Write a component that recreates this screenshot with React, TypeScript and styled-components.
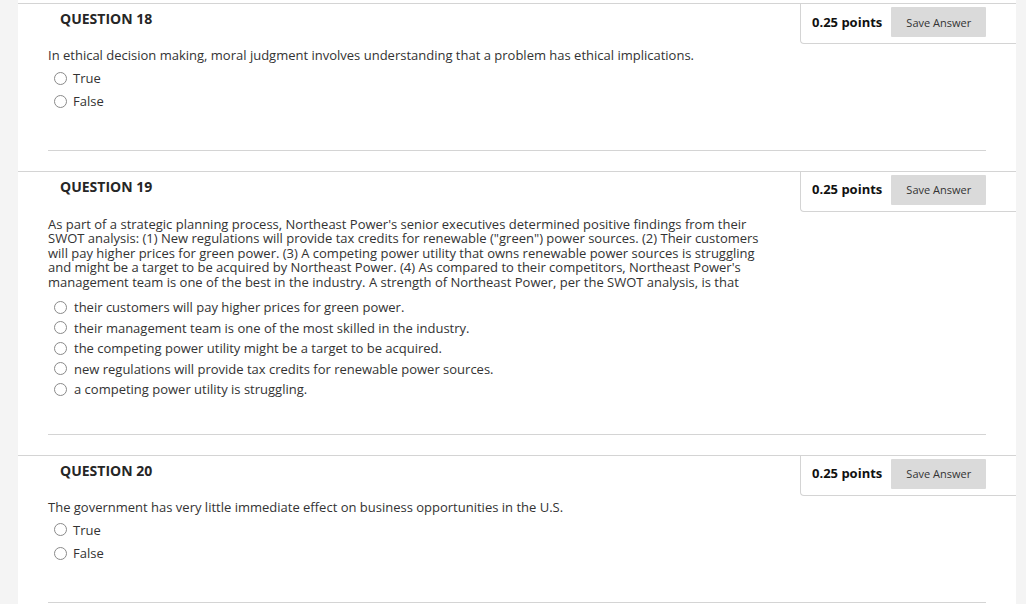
import React from "react";
import styled, { createGlobalStyle } from "styled-components";

const Global = createGlobalStyle`
  html, body { margin: 0; padding: 0; background: #f4f4f4; }
  body { font-family: "Open Sans", "Liberation Sans", sans-serif; color: #333; }
`;

const Page = styled.div`
  margin-left: 18px;
  width: 998px;
  height: 604px;
  overflow: hidden;
  background: #fff;
  padding-top: 3px;
  box-sizing: border-box;
`;

const Block = styled.section`
  border-top: 1px solid #d4d4d4;
  margin-bottom: 20px;
`;

const Header = styled.div`
  display: flex;
  justify-content: space-between;
  align-items: flex-start;
`;

const Title = styled.h3`
  margin: 0;
  padding: 6px 0 0 42px;
  font-size: 14px;
  line-height: 18px;
  font-weight: 700;
  color: #262626;
`;

const PointsBox = styled.div`
  width: 216px;
  height: 40px;
  box-sizing: border-box;
  border-left: 1px solid #d4d4d4;
  border-bottom: 1px solid #d4d4d4;
  border-bottom-left-radius: 4px;
  display: flex;
  align-items: center;
  padding: 0 0 3px 11px;
  gap: 9px;
`;

const Points = styled.span`
  font-size: 13px;
  font-weight: 700;
  color: #111;
  white-space: nowrap;
  margin-top: -1px;
`;

const SaveButton = styled.button`
  width: 95px;
  height: 30px;
  border: none;
  background: #dadada;
  border-radius: 1px;
  font-family: "Open Sans", "Liberation Sans", sans-serif;
  font-size: 11px;
  color: #333;
  padding: 0;
`;

const Body = styled.div<{ $gap: number }>`
  padding-left: 30px;
  padding-top: ${(p) => p.$gap}px;
`;

const Prompt = styled.p`
  margin: 0;
  max-width: 714px;
  font-size: 13px;
  line-height: 14.5px;
  color: #333;
`;

const Options = styled.ul<{ $top: number; $bottom: number }>`
  list-style: none;
  margin: ${(p) => p.$top}px 0 ${(p) => p.$bottom}px 0;
  padding: 0 0 0 6px;
`;

const Option = styled.li<{ $h: number; $textGap: number }>`
  display: flex;
  align-items: center;
  height: ${(p) => p.$h}px;
  gap: ${(p) => p.$textGap}px;
  font-size: 13px;
  color: #333;
`;

const Radio = styled.span`
  width: 11px;
  height: 11px;
  border: 1px solid #8a8a8a;
  border-radius: 50%;
  flex: none;
  background: #fff;
`;

const Divider = styled.hr`
  margin: 0 30px;
  border: none;
  border-top: 1px solid #d4d4d4;
`;

type Q = {
  n: number;
  text: string;
  options: string[];
  gap: number;
  optTop: number;
  optBottom: number;
  rowH: number;
  textGap: number;
};

const questions: Q[] = [
  {
    n: 18,
    text: "In ethical decision making, moral judgment involves understanding that a problem has ethical implications.",
    options: ["True", "False"],
    gap: 4,
    optTop: 4,
    optBottom: 37,
    rowH: 23,
    textGap: 6,
  },
  {
    n: 19,
    text: "As part of a strategic planning process, Northeast Power's senior executives determined positive findings from their SWOT analysis: (1) New regulations will provide tax credits for renewable (\"green\") power sources. (2) Their customers will pay higher prices for green power. (3) A competing power utility that owns renewable power sources is struggling and might be a target to be acquired by Northeast Power. (4) As compared to their competitors, Northeast Power's management team is one of the best in the industry. A strength of Northeast Power, per the SWOT analysis, is that",
    options: [
      "their customers will pay higher prices for green power.",
      "their management team is one of the most skilled in the industry.",
      "the competing power utility might be a target to be acquired.",
      "new regulations will provide tax credits for renewable power sources.",
      "a competing power utility is struggling.",
    ],
    gap: 5,
    optTop: 8,
    optBottom: 34,
    rowH: 20.5,
    textGap: 7,
  },
  {
    n: 20,
    text: "The government has very little immediate effect on business opportunities in the U.S.",
    options: ["True", "False"],
    gap: 4,
    optTop: 4,
    optBottom: 37,
    rowH: 23.5,
    textGap: 6,
  },
];

export default function App() {
  return (
    <>
      <Global />
      <Page>
        {questions.map((q) => (
          <Block key={q.n}>
            <Header>
              <Title>QUESTION {q.n}</Title>
              <PointsBox>
                <Points>0.25 points</Points>
                <SaveButton>Save Answer</SaveButton>
              </PointsBox>
            </Header>
            <Body $gap={q.gap}>
              <Prompt>{q.text}</Prompt>
              <Options $top={q.optTop} $bottom={q.optBottom}>
                {q.options.map((o) => (
                  <Option key={o} $h={q.rowH} $textGap={q.textGap}>
                    <Radio />
                    <span>{o}</span>
                  </Option>
                ))}
              </Options>
            </Body>
            <Divider />
          </Block>
        ))}
      </Page>
    </>
  );
}
